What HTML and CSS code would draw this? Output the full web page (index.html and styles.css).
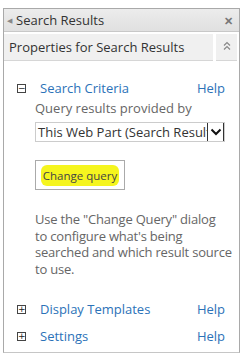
FILE: index.html
```html
<!DOCTYPE html>
<html lang="en">
<head>
    <meta charset="UTF-8">
    <title>Search Results</title>
    <link rel="stylesheet" href="styles.css">
</head>
<body>
    <div class="panel">
        <div class="title-bar">
            <span class="back">&#9664;</span>
            <span class="title">Search Results</span>
            <span class="close">&#10005;</span>
        </div>
        <div class="props-bar">
            <div class="props-title">Properties for Search Results</div>
            <div class="props-toggle">
                <svg width="8" height="10" viewBox="0 0 8 10">
                    <path d="M1 4.5 L4 1.5 L7 4.5 M1 8.5 L4 5.5 L7 8.5" fill="none" stroke="#888" stroke-width="1.2"/>
                </svg>
            </div>
        </div>

        <div class="section open">
            <div class="section-head">
                <span class="box">&minus;</span>
                <a class="section-name">Search Criteria</a>
                <a class="help">Help</a>
            </div>
            <div class="section-body">
                <label class="field-label">Query results provided by</label>
                <div class="select">
                    <span class="select-text">This Web Part (Search Results)</span>
                    <span class="select-arrow">
                        <svg width="12" height="8" viewBox="0 0 12 8">
                            <path d="M1.5 1.5 L6 6 L10.5 1.5" fill="none" stroke="#111" stroke-width="2"/>
                        </svg>
                    </span>
                </div>
                <button class="query-btn" type="button"><span class="mark">Change query</span></button>
                <p class="note">Use the "Change Query" dialog<br>to configure what's being<br>searched and which result source<br>to use.</p>
            </div>
        </div>

        <div class="section">
            <div class="section-head">
                <span class="box">+</span>
                <a class="section-name">Display Templates</a>
                <a class="help">Help</a>
            </div>
        </div>
        <div class="section">
            <div class="section-head">
                <span class="box">+</span>
                <a class="section-name">Settings</a>
                <a class="help">Help</a>
            </div>
        </div>
    </div>
</body>
</html>
```

FILE: styles.css
```css
* {
    box-sizing: border-box;
    margin: 0;
    padding: 0;
}

body {
    font-family: "Open Sans", "Noto Sans", sans-serif;
    background-color: #fff;
    color: #444;
    padding: 8px 6px 0 3px;
}

.panel {
    border: 1px solid #a9a9a9;
    border-bottom-color: #c6c6c6;
    height: 345px;
}

.title-bar {
    display: flex;
    align-items: center;
    height: 23px;
    padding: 0 6px 0 3px;
    background: linear-gradient(#ececec, #e0e0e0);
    border-bottom: 1px solid #c8c8c8;
    font-size: 13px;
    color: #333;
}

.back {
    font-size: 7px;
    color: #888;
    margin-right: 4px;
}

.title {
    flex: 1;
}

.close {
    font-size: 11px;
    font-weight: bold;
    color: #777;
}

.props-bar {
    display: flex;
    gap: 3px;
    margin-top: 2px;
    height: 27px;
}

.props-title {
    flex: 1;
    background-color: #f0f0f0;
    border-bottom: 1px solid #d6d6d6;
    padding: 4px 0 0 5px;
    font-size: 13px;
    color: #333;
}

.props-toggle {
    width: 21px;
    background-color: #f0f0f0;
    border-bottom: 1px solid #d6d6d6;
    display: flex;
    justify-content: center;
    padding-top: 7px;
    margin-right: 2px;
}

.section {
    padding: 0 14px 0 13px;
}

.section-head {
    display: flex;
    align-items: center;
    height: 27px;
    font-size: 13px;
}

.open .section-head {
    margin-top: 14px;
    height: 26px;
}

.box {
    width: 9px;
    height: 9px;
    border: 1px solid #444;
    font-size: 9px;
    line-height: 6px;
    text-align: center;
    color: #222;
    margin-right: 14px;
    font-family: "DejaVu Sans", sans-serif;
}

.section-name {
    flex: 1;
    color: #2b72b8;
}

.help {
    color: #2b72b8;
}

.section-body {
    padding-left: 18px;
}

.field-label {
    display: block;
    font-size: 13px;
    line-height: 18px;
    color: #666;
    margin-top: -2px;
}

.select {
    display: flex;
    align-items: center;
    height: 20px;
    border: 1px solid #ccc;
    margin-top: 5px;
    overflow: hidden;
}

.select-text {
    flex: 1;
    white-space: nowrap;
    overflow: hidden;
    font-size: 13px;
    color: #333;
    padding-left: 2px;
}

.select-arrow {
    width: 17px;
    height: 20px;
    border: 1px solid #333;
    display: flex;
    align-items: center;
    justify-content: center;
    background-color: #fff;
}

.query-btn {
    display: block;
    margin-top: 18px;
    width: 90px;
    height: 30px;
    background-color: #fff;
    border: 1px solid #aaa;
    font-family: "Open Sans", "Noto Sans", sans-serif;
    font-size: 11.5px;
    color: #444;
}

.mark {
    background-color: #f5f51e;
    padding: 3px 2px;
    border-radius: 6px;
}

.note {
    font-size: 13px;
    line-height: 16.7px;
    letter-spacing: -0.2px;
    color: #666;
    margin-top: 21px;
    margin-right: -14px;
    margin-bottom: 18px;
}
```
